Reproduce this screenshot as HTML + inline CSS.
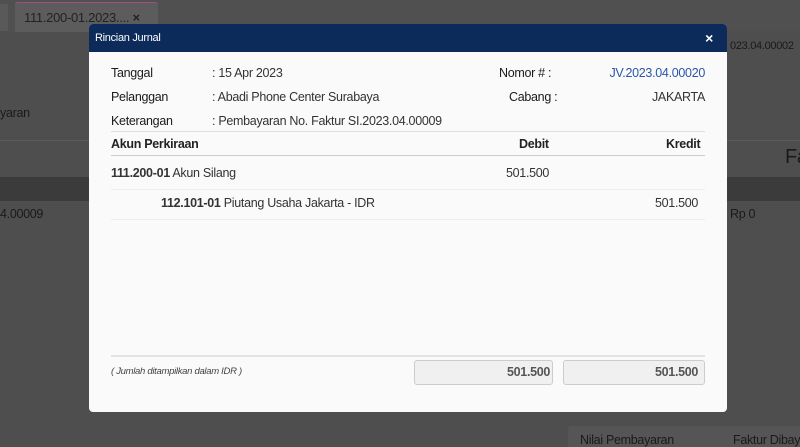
<!DOCTYPE html>
<html><head><style>
body{margin:0;width:800px;height:447px;overflow:hidden;background:#4e4e4e;font-family:"Liberation Sans",sans-serif;position:relative}
.a{position:absolute;white-space:nowrap}
.m{left:89px;top:24px;width:638px;height:388px;background:#fafafa;border-radius:4px;overflow:hidden}
.h{height:28px;background:#0c2b5b;color:#fff;font-size:11px;line-height:28px;padding-left:6px;letter-spacing:-0.3px}
.t{font-size:12.5px;color:#333;letter-spacing:-0.3px}
.l{color:#1a1a1a}
.b{font-weight:bold;color:#222}
</style></head><body>
<div class="a" style="left:0;top:0;width:800px;height:31px;background:#505050"></div>
<div class="a" style="left:0;top:4px;width:8px;height:27px;background:#595959"></div>
<div class="a" style="left:15px;top:2px;width:143px;height:29px;background:#5c5c5c;border-top:1px solid #a05080;border-radius:3px 3px 0 0"></div>
<div class="a t" style="left:24px;top:10px;color:#222;font-size:13px">111.200-01.2023.... <b>×</b></div>
<div class="a" style="left:0;top:177px;width:800px;height:24px;background:#3b3b3b"></div>
<div class="a" style="left:0;top:140px;width:800px;height:1px;background:#5a5a5a"></div>
<div class="a t" style="left:0;top:106px;color:#1a1a1a">yaran</div>
<div class="a t" style="left:0;top:207px;color:#1a1a1a">4.00009</div>
<div class="a t" style="left:730px;top:207px;color:#1a1a1a">Rp 0</div>
<div class="a t" style="left:730px;top:40px;color:#1a1a1a;font-size:11px">023.04.00002</div>
<div class="a t" style="left:785px;top:146px;color:#1a1a1a;font-size:20px">Fa</div>
<div class="a" style="left:568px;top:426px;width:232px;height:21px;background:#555;border-radius:3px 0 0 0"></div>
<div class="a t" style="left:580px;top:433px;color:#1a1a1a">Nilai Pembayaran</div>
<div class="a t" style="left:733px;top:433px;color:#1a1a1a">Faktur Dibay</div>
<div class="a m">
<div class="h">Rincian Jurnal <span style="position:absolute;right:14px;font-weight:bold;font-size:14px">×</span></div>
<div class="a t l" style="left:22px;top:42px">Tanggal</div>
<div class="a t" style="left:123px;top:42px">: 15 Apr 2023</div>
<div class="a t l" style="left:410px;top:42px">Nomor # :</div>
<div class="a t" style="right:22px;top:42px;color:#2a56a8">JV.2023.04.00020</div>
<div class="a t l" style="left:22px;top:66px">Pelanggan</div>
<div class="a t" style="left:123px;top:66px">: Abadi Phone Center Surabaya</div>
<div class="a t l" style="left:420px;top:66px">Cabang :</div>
<div class="a t" style="right:22px;top:66px">JAKARTA</div>
<div class="a t l" style="left:22px;top:90px">Keterangan</div>
<div class="a t" style="left:123px;top:90px">: Pembayaran No. Faktur SI.2023.04.00009</div>
<div class="a" style="left:22px;top:107px;width:594px;height:1px;background:#ddd"></div>
<div class="a t b" style="left:22px;top:113px">Akun Perkiraan</div>
<div class="a t b" style="left:430px;top:113px">Debit</div>
<div class="a t b" style="left:577px;top:113px">Kredit</div>
<div class="a" style="left:22px;top:131px;width:594px;height:1px;background:#ccc"></div>
<div class="a t" style="left:22px;top:142px"><b>111.200-01</b> Akun Silang</div>
<div class="a t" style="left:417px;top:142px">501.500</div>
<div class="a" style="left:22px;top:165px;width:594px;height:1px;background:#eee"></div>
<div class="a t" style="left:72px;top:172px"><b>112.101-01</b> Piutang Usaha Jakarta - IDR</div>
<div class="a t" style="left:566px;top:172px">501.500</div>
<div class="a" style="left:22px;top:195px;width:594px;height:1px;background:#eee"></div>
<div class="a" style="left:22px;top:331px;width:594px;height:2px;background:#e2e2e2"></div>
<div class="a t" style="left:22px;top:342px;font-size:9.5px;font-style:italic;color:#444">( Jumlah ditampilkan dalam IDR )</div>
<div class="a" style="left:325px;top:336px;width:137px;height:23px;background:#f0f0f0;border:1px solid #ccc;border-radius:3px"></div>
<div class="a t b" style="left:418px;top:341px;color:#555">501.500</div>
<div class="a" style="left:474px;top:336px;width:140px;height:23px;background:#f0f0f0;border:1px solid #ccc;border-radius:3px"></div>
<div class="a t b" style="left:566px;top:341px;color:#555">501.500</div>
</div>
</body></html>
